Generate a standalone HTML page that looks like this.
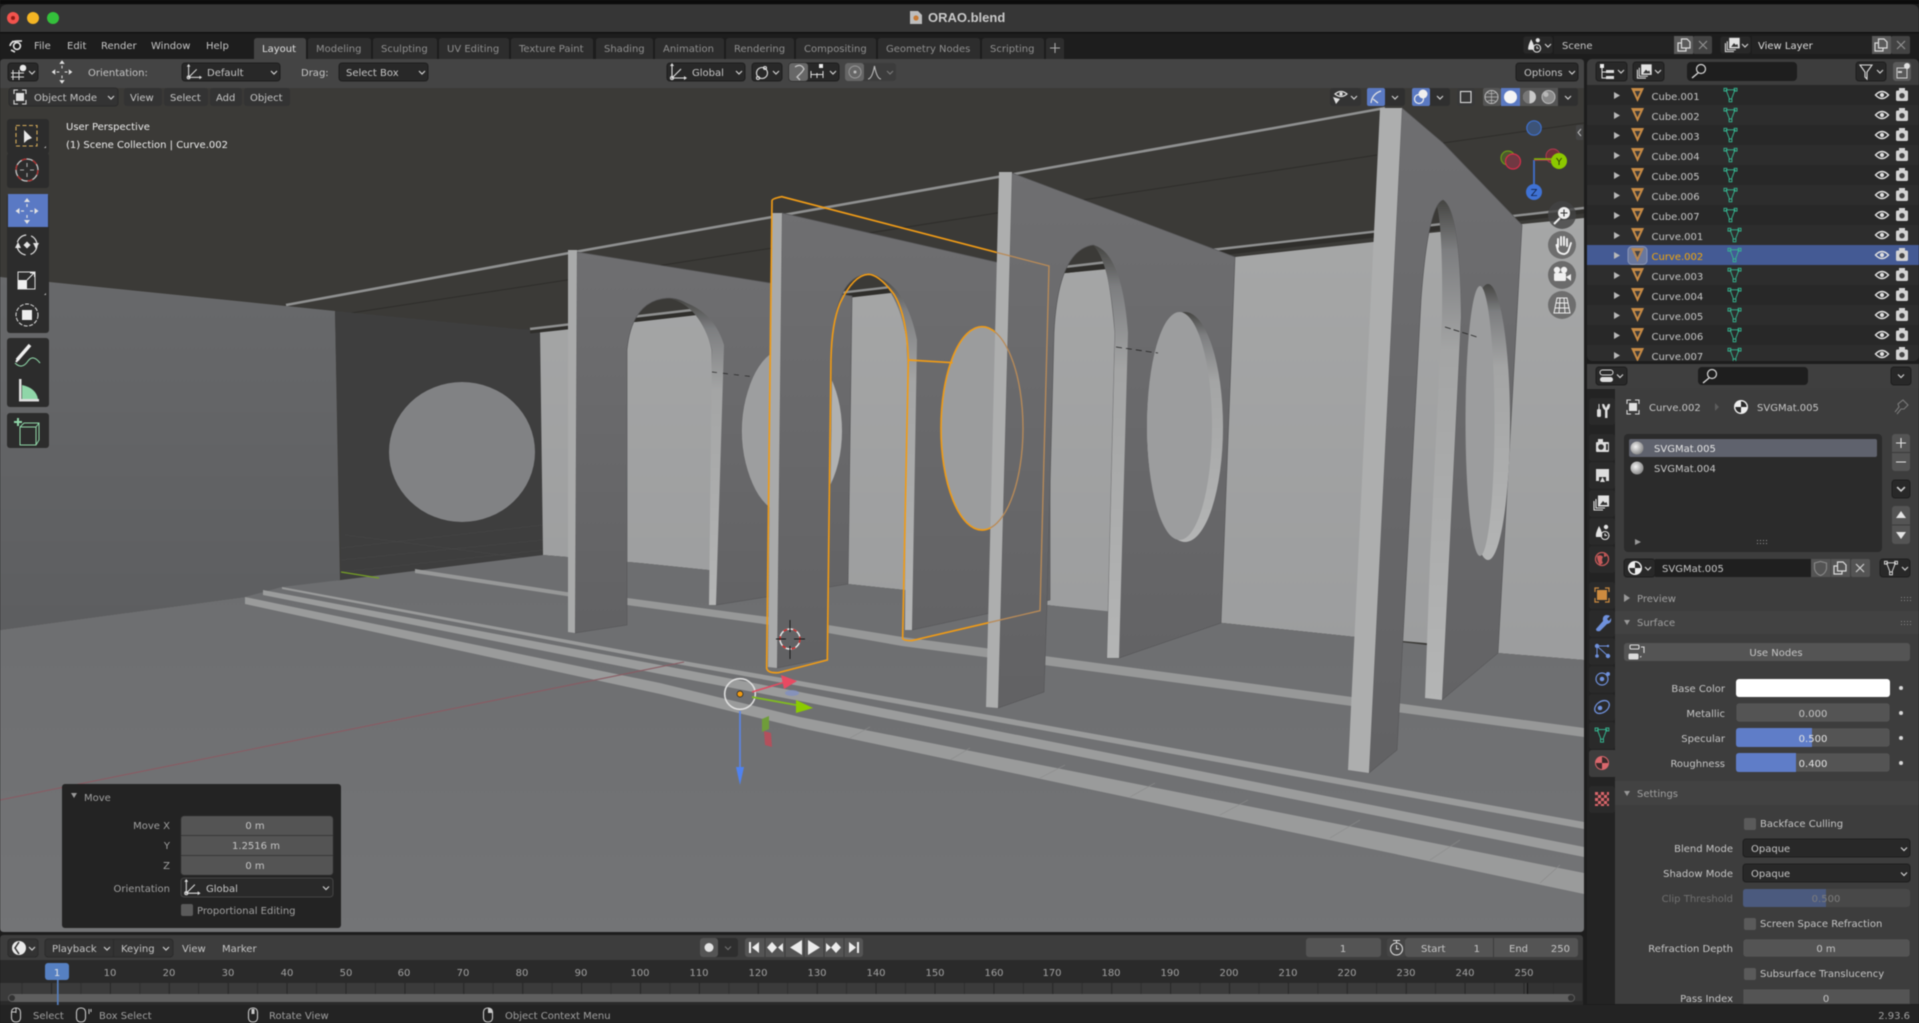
<!DOCTYPE html>
<html><head><meta charset="utf-8"><title>ORAO.blend</title>
<style>
html,body{margin:0;padding:0;background:#1d1d1d;overflow:hidden}
svg{display:block;position:absolute;left:0;top:0;filter:blur(.4px)}
text{font-family:"DejaVu Sans","Liberation Sans",sans-serif;font-size:10px;fill:#c6c6c6}
.tab{fill:#8f8f8f}.dim{fill:#a0a0a0}.w{fill:#e4e4e4}.m{text-anchor:middle}.e{text-anchor:end}
.dd{fill:#282828;stroke:#1e1e1e;stroke-width:1}.nf{fill:#545454;stroke:#3a3a3a;stroke-width:.6}
.ln{fill:none;stroke:#d8d8d8;stroke-width:1.2}
.s{fill:#a9aaaa}.fc{fill:url(#gp);stroke:#58585a;stroke-width:.7}
.navb{fill:#2a2a2a}
</style></head>
<body>
<svg width="1919" height="1023" viewBox="0 0 1919 1023" xmlns="http://www.w3.org/2000/svg">
<defs>
<linearGradient id="gp" x1="0" y1="0" x2="0" y2="1"><stop offset="0" stop-color="#6f6f71"/><stop offset="1" stop-color="#626264"/></linearGradient>
<linearGradient id="gf" x1="0" y1="0" x2="0" y2="1"><stop offset="0" stop-color="#6d6e70"/><stop offset="1" stop-color="#737476"/></linearGradient>
<linearGradient id="gw" x1="0" y1="0" x2="0" y2="1"><stop offset="0" stop-color="#a6a7a7"/><stop offset="1" stop-color="#9c9d9e"/></linearGradient>
<linearGradient id="gl" x1="0" y1="0" x2="0" y2="1"><stop offset="0" stop-color="#68696b"/><stop offset="1" stop-color="#5d5e60"/></linearGradient>
<linearGradient id="gs" x1="0" y1="0" x2="0" y2="1"><stop offset="0" stop-color="#454542"/><stop offset=".1" stop-color="#7d7e80"/><stop offset=".3" stop-color="#a4a5a5"/><stop offset="1" stop-color="#b4b5b5"/></linearGradient>
<radialGradient id="sph" cx=".4" cy=".4" r=".7"><stop offset="0" stop-color="#f4f4f4"/><stop offset="1" stop-color="#7a7a7a"/></radialGradient>
<pattern id="tl" x="51" y="0" width="58.9" height="30" patternUnits="userSpaceOnUse"><rect x="0" width="1" height="30" fill="#262626"/><rect x="29.4" width="1" height="30" fill="#2f2f2f"/></pattern>
<clipPath id="cpFront"><polygon points="0,0 1075,0 1040,1560 0,1560"/></clipPath>
<clipPath id="cpBack"><polygon points="1075,0 1600,0 1600,1560 1040,1560"/></clipPath>
<clipPath id="cpOut"><rect x="1587" y="59" width="332" height="302" rx="5"/></clipPath>
<clipPath id="cpView"><path d="M0,88 H1584 V928 Q1584,932 1580,932 H4 Q0,932 0,928 Z"/></clipPath>
<g id="ch"><polyline points="-3,-1.5 0,1.5 3,-1.5" fill="none" stroke="#cfcfcf" stroke-width="1.2"/></g>
<g id="ob"><polygon points="-6.5,-7 6.5,-7 0,7" fill="#c68a45"/><polygon points="-2.8,-4 2.8,-4 0,2.2" fill="#3a3a3a"/></g>
<g id="me" fill="none" stroke="#35b892" stroke-width=".9"><path d="M-4.5,-5.2 H4.5 L.8,4.5 M-4.5,-5.2 L-.8,4.5"/><rect x="-6.5" y="-6.7" width="2.8" height="2.8"/><rect x="3.7" y="-6.7" width="2.8" height="2.8"/><rect x="-1.4" y="4" width="2.8" height="2.8"/></g>
<g id="mew" fill="none" stroke="#e4e4e4" stroke-width=".9"><path d="M-4.5,-5.2 H4.5 L.8,4.5 M-4.5,-5.2 L-.8,4.5"/><rect x="-6.5" y="-6.7" width="2.8" height="2.8"/><rect x="3.7" y="-6.7" width="2.8" height="2.8"/><rect x="-1.4" y="4" width="2.8" height="2.8"/></g>
<g id="ey"><path d="M-6.5,0 Q0,-7 6.5,0 Q0,7 -6.5,0 Z" fill="none" stroke="#e0e0e0" stroke-width="1.4"/><circle r="2.1" fill="#e0e0e0"/></g>
<g id="ca"><rect x="-6" y="-4.5" width="12" height="10.5" rx="1.5" fill="#d4d4d4"/><rect x="-3" y="-7" width="6" height="3" fill="#d4d4d4"/><circle cy=".7" r="3.2" fill="#444" stroke="#d4d4d4"/></g>
<g id="mv" fill="#e2e2e2"><polygon points="0,-13 -3,-9 3,-9"/><polygon points="0,13 -3,9 3,9"/><polygon points="-11.5,0 -7.5,-3 -7.5,3"/><polygon points="11.5,0 7.5,-3 7.5,3"/><rect x="-.6" y="-7" width="1.2" height="3"/><rect x="-.6" y="4" width="1.2" height="3"/><rect x="-6" y="-.6" width="3" height="1.2"/><rect x="3" y="-.6" width="3" height="1.2"/></g>
<g id="ax" fill="none" stroke="#dedede" stroke-width="1.1"><path d="M-6,-7 V6 H7"/><path d="M-6,6 L3,-3"/><polygon points="-6,-9 -8,-6 -4,-6" fill="#dedede" stroke="none"/><polygon points="9,6 6,4 6,8" fill="#dedede" stroke="none"/><circle cx="-6" cy="6" r="1.6"/></g>
<g id="cb"><circle r="7" fill="#eee"/><path d="M0,0 V-5.6 A5.6,5.6 0 0 1 5.6,0 Z M0,0 V5.6 A5.6,5.6 0 0 1 -5.6,0 Z" fill="#2a2a2a"/></g>
<g id="msel" fill="none" stroke="#d8d8d8" stroke-width="1.1"><path d="M-6,-3 V-7 H-2 M2,-7 H6 V-3 M6,3 V7 H2 M-2,7 H-6 V3"/><rect x="-4" y="-4" width="8" height="8" fill="#e0e0e0" stroke="none"/></g>
<g id="copy" fill="none" stroke="#dcdcdc" stroke-width="1.2"><path d="M-2.5,-6 H3 L6,-3 V3 H-2.5 Z"/><path d="M-2.5,-2 H-6 V6 H2 V3"/></g>
<g id="xx" stroke="#cfcfcf" stroke-width="1.2"><path d="M-4,-4 L4,4 M4,-4 L-4,4"/></g>
<g id="sc"><path d="M-6,5 Q-7,2 -3,-6 Q1,1 0,5 Z" fill="#e2e2e2"/><circle cx="4" cy="-5" r="2.2" fill="#e2e2e2"/><circle cx="3" cy="3.5" r="4" fill="none" stroke="#e2e2e2" stroke-width="1.1"/><path d="M3,1.5 V3.5 H5" stroke="#e2e2e2" fill="none"/></g>
<g id="vl" fill="none" stroke="#e2e2e2" stroke-width="1.1"><rect x="-3.5" y="-7" width="10" height="10" fill="#e2e2e2"/><path d="M-6,-4 V5 H3 M-8,-2 V7 H1"/><polygon points="-2,2 1,-2 3,0 4.5,-1 5.5,2" fill="#333" stroke="none"/></g>
<g id="mouse" fill="none" stroke="#c9c9c9" stroke-width="1.1"><rect x="-4.5" y="-7" width="9" height="14" rx="4"/></g>
</defs>

<!-- window base -->
<rect width="1919" height="1023" fill="#1d1d1d"/>
<rect width="1919" height="4" fill="#0b0b0b"/>
<path d="M0,12 Q0,4.5 8,4.5 H1911 Q1919,4.5 1919,12 V32 H0 Z" fill="#363636"/>
<rect y="32" width="1919" height="1.2" fill="#0d0d0d"/>
<circle cx="13" cy="18" r="6" fill="#f2534d"/><circle cx="13" cy="18" r="2" fill="#8e1b16"/>
<circle cx="33" cy="18" r="6" fill="#f4b524"/>
<circle cx="53" cy="18" r="6" fill="#34c03b"/>
<path d="M910,11 H918 L922,15 V24 H910 Z" fill="#bdbdbd"/><circle cx="916" cy="18" r="2.6" fill="#c77a35"/>
<text x="928" y="22" style="font:bold 13px 'Liberation Sans',sans-serif;fill:#c9c9c9">ORAO.blend</text>

<!-- top bar -->
<g fill="none" stroke="#e4e4e4" stroke-width="1.6"><circle cx="17" cy="46" r="3.4"/><path d="M10,46 Q11,41 17,41 L22,41 M12,41.5 H16 M11,50 L15,52"/></g>
<text x="34" y="49">File</text><text x="67" y="49">Edit</text><text x="101" y="49">Render</text><text x="151" y="49">Window</text><text x="206" y="49">Help</text>
<path d="M254,59 V41 Q254,38 257,38 H303 Q306,38 306,41 V59 Z" fill="#444"/>
<g fill="#2d2d2d">
<path d="M308,59 V41 Q308,38 311,38 H368 Q371,38 371,41 V59 Z"/><path d="M373,59 V41 Q373,38 376,38 H434 Q437,38 437,41 V59 Z"/><path d="M439,59 V41 Q439,38 442,38 H506 Q509,38 509,41 V59 Z"/><path d="M511,59 V41 Q511,38 514,38 H590 Q593,38 593,41 V59 Z"/><path d="M596,59 V41 Q596,38 599,38 H650 Q653,38 653,41 V59 Z"/><path d="M655,59 V41 Q655,38 658,38 H721 Q724,38 724,41 V59 Z"/><path d="M726,59 V41 Q726,38 729,38 H791 Q794,38 794,41 V59 Z"/><path d="M796,59 V41 Q796,38 799,38 H873 Q876,38 876,41 V59 Z"/><path d="M878,59 V41 Q878,38 881,38 H977 Q980,38 980,41 V59 Z"/><path d="M982,59 V41 Q982,38 985,38 H1041 Q1044,38 1044,41 V59 Z"/><path d="M1046,59 V41 Q1046,38 1049,38 H1061 Q1064,38 1064,41 V59 Z"/>
</g>
<text x="262" y="52" style="fill:#e0e0e0">Layout</text>
<text class="tab" x="316" y="52">Modeling</text><text class="tab" x="381" y="52">Sculpting</text><text class="tab" x="447" y="52">UV Editing</text><text class="tab" x="519" y="52">Texture Paint</text><text class="tab" x="604" y="52">Shading</text><text class="tab" x="663" y="52">Animation</text><text class="tab" x="734" y="52">Rendering</text><text class="tab" x="804" y="52">Compositing</text><text class="tab" x="886" y="52">Geometry Nodes</text><text class="tab" x="990" y="52">Scripting</text>
<path d="M1055,43 V53 M1050,48 H1060" stroke="#a8a8a8" stroke-width="1.1"/>

<!-- top right scene/view layer -->
<rect class="dd" x="1523" y="36" width="30" height="18" rx="3"/><use href="#sc" transform="translate(1534,45) scale(.95)"/><use href="#ch" transform="translate(1548,45.5)"/>
<rect x="1554" y="36" width="120" height="18" fill="#232323"/><text x="1562" y="49">Scene</text>
<rect x="1674" y="36" width="19" height="18" fill="#5a5a5a"/><use href="#copy" transform="translate(1684,45)"/>
<rect x="1693" y="36" width="19" height="18" rx="2" fill="#434343"/><use href="#xx" transform="translate(1703,45)" opacity=".55"/>
<rect class="dd" x="1720" y="36" width="31" height="18" rx="3"/><use href="#vl" transform="translate(1733,45) scale(.95)"/><use href="#ch" transform="translate(1745,45.5)"/>
<rect x="1752" y="36" width="120" height="18" fill="#232323"/><text x="1758" y="49" style="fill:#dcdcdc">View Layer</text>
<rect x="1872" y="36" width="19" height="18" fill="#5a5a5a"/><use href="#copy" transform="translate(1881,45)"/>
<rect x="1891" y="36" width="19" height="18" rx="2" fill="#434343"/><use href="#xx" transform="translate(1901,45)" opacity=".55"/>

<!-- VIEWPORT SCENE -->
<path d="M0,63 Q0,59 4,59 H1580 Q1584,59 1584,63 V88 H0 Z" fill="#444"/>
<g clip-path="url(#cpView)">
<rect x="0" y="84" width="1584" height="848" fill="#3b3a37"/>
<!-- ceiling lines -->
<path d="M351,313 L567,280 L997,213 L1377,155" stroke="#2e2d2a" stroke-width="1" fill="none"/>
<path d="M1443,143 L1584,123" stroke="#2e2d2a" stroke-width="1" fill="none"/>
<path d="M286,305 L569,253 L1020,173 L1280,127 L1385,108" stroke="#8f9090" stroke-width="2.6" fill="none"/>
<!-- left wall -->
<polygon points="0,277 335,311 340,580 245,597 0,630" fill="url(#gl)"/>
<!-- dark back wall -->
<polygon points="335,311 518,329 543,330 543,556 341,580" fill="#3e3e3e"/>
<g stroke="#484848" stroke-width=".5" fill="none"><path d="M341,560 L543,540 M341,548 L543,525 M341,572 L543,550 M345,535 L540,560"/></g>
<ellipse cx="462" cy="452" rx="73" ry="70" fill="#818284"/>
<!-- back light wall -->
<polygon points="540,330 640,320 852,295 1066,273 1235,257 1373,242 1429,233 1584,218 1584,660 1498,653 1425,643 1356,637 1223,623 1106,612 1047,605 848,584 708,570 640,563 543,555" fill="url(#gw)"/>
<path d="M530,329 L640,317 L1220,251 L1584,209" stroke="#2f2e2b" stroke-width="5" fill="none" transform="translate(0,2)"/>
<path d="M530,329 L640,316 L1220,249 L1584,208" stroke="#8f9090" stroke-width="2.4" fill="none"/>
<!-- floor -->
<polygon points="0,630 245,597 282,587 341,580 543,555 640,563 848,584 1047,605 1223,623 1356,637 1498,653 1584,660 1584,932 0,932" fill="url(#gf)"/>
<path d="M341,572 L379,578" stroke="#76a025" stroke-width="1.2"/>
<!-- steps -->
<polygon points="415,569 566,592 627,598 828,625 902,637 1584,728 1584,737 902,646 828,633 627,605 566,596 415,573" fill="#979898"/>
<polygon points="282,587 660,657 800,681 1584,822 1584,829 800,686 660,661 282,589" fill="#9a9b9b"/>
<polygon points="263,590 660,665 800,692 1584,847 1584,857 800,701 660,674 263,595" fill="#9b9c9c"/>
<polygon points="245,597 660,683 800,717 1584,873 1584,894 800,728 660,694 245,604" fill="#9a9b9b"/>
<path d="M850,738 L870,727 M950,760 L970,748 M1040,778 L1065,765 M1130,797 L1155,783 M1220,815 L1248,800 M1330,838 L1360,820 M1430,860 L1460,840 M1540,883 L1560,865" stroke="#8a8b8b" stroke-width=".7" fill="none"/>
<!-- red axis -->
<path d="M0,800 L684,662" stroke="#8a5a62" stroke-width="1.1"/>

<!-- Panel A -->
<path class="fc" d="M577,252 L770,283 L852,296 L848,584 L716,605 L712,350 Q700,298 668,298 Q632,300 627,350 L627,625 L575,633 Z"/>
<path d="M668,298 Q712,305 724,345 L716,605 L709,605 L712,350 Q700,305 668,298 Z" fill="url(#gs)"/>
<polygon class="s" points="568,250 577,250 575,633 568,632"/>
<ellipse cx="792" cy="431" rx="50" ry="84" fill="#b0b1b1"/><ellipse cx="787" cy="431" rx="44.5" ry="83" fill="#9d9e9f"/>
<path d="M712,372 L755,377" stroke="#222" stroke-width=".7" stroke-dasharray="5 6" fill="none"/>

<!-- Panel B -->
<path class="fc" d="M782,213 L1000,263 L1050,275 L1050,600 L912,630 L907,340 Q895,274 868,274 Q835,276 832,347 L828,658 L777,668 Z"/>
<ellipse cx="982" cy="428" rx="41" ry="102" fill="#9b9c9d"/>
<path d="M868,274 Q905,280 917,340 L912,630 L905,630 L907,340 Q895,280 868,274 Z" fill="url(#gs)"/>
<polygon class="s" points="772,213 782,213 777,668 768,667"/>

<!-- Panel C -->
<path class="fc" d="M1012,173 L1235,257 L1221,623 L1119,658 L1107,658 L1115,333 Q1108,250 1093,245 Q1058,250 1054,333 L1047,603 L1044,692 L998,708 Z"/>
<path d="M1093,245 Q1122,252 1128,333 L1119,658 L1107,658 L1115,333 Q1110,262 1093,245 Z" fill="url(#gs)"/>
<ellipse cx="1185" cy="427" rx="38" ry="115" fill="url(#gs)"/><ellipse cx="1179.5" cy="426" rx="32.5" ry="114" fill="#9c9d9e"/>
<polygon points="999,172 1012,172 998,708 986,707" fill="#adaeae"/>
<path d="M1116,347 L1158,353" stroke="#222" stroke-width=".8" stroke-dasharray="6 4" fill="none"/>

<!-- Panel D -->
<path class="fc" d="M1402,108 L1443,143 L1522,225 L1498,653 L1442,700 L1447,600 L1461,317 Q1460,210 1443,200 Q1428,205 1421,300 L1405,600 L1397,750 L1369,773 Z"/>
<path d="M1443,200 Q1460,210 1461,317 L1447,600 L1442,700 L1425,698 L1430,560 L1442,317 Q1443,230 1437,206 Z" fill="url(#gs)"/>
<ellipse cx="1488" cy="422" rx="22" ry="138" fill="url(#gs)"/><ellipse cx="1480" cy="421" rx="14.5" ry="135" fill="#9c9d9e"/>
<polygon points="1380,108 1402,108 1369,773 1348,770" fill="#adaeae"/>
<path d="M1445,327 L1477,337" stroke="#222" stroke-width=".8" stroke-dasharray="6 3" fill="none"/>

<!-- selection outline -->
<g transform="translate(640,180) scale(.33333)" fill="none" stroke-width="5">
<g clip-path="url(#cpFront)" stroke="#ef9b17">
<path d="M396,62 Q396,56 425,50 L1227,258 L1200,1292 L815,1382 Q790,1382 788,1375 L805,540 Q800,400 760,340 Q715,283 685,283 Q640,285 600,370 Q575,430 573,540 L562,1440 L415,1478 Q383,1480 380,1465 Z"/>
<ellipse cx="1026" cy="745" rx="123" ry="305"/><path d="M805,540 L938,548"/>
</g>
<g clip-path="url(#cpBack)" stroke="#b98b58" stroke-width="4">
<path d="M396,62 Q396,56 425,50 L1227,258 L1200,1292 L815,1382"/>
<ellipse cx="1026" cy="745" rx="123" ry="305"/>
</g>
</g>
<!-- 3D cursor -->
<circle cx="790" cy="639" r="10" fill="none" stroke="#eee" stroke-width="1.4"/>
<circle cx="790" cy="639" r="10" fill="none" stroke="#d02020" stroke-width="1.4" stroke-dasharray="4 6"/>
<path d="M790,620 V632 M790,646 V659 M776,639 H786 M794,639 H805" stroke="#1a1a1a" stroke-width="1"/>
<!-- gizmo -->
<circle cx="740" cy="694" r="15.3" fill="none" stroke="#dedede" stroke-width="1.6"/>
<circle cx="740" cy="694" r="3" fill="#f09a10" stroke="#222" stroke-width=".7"/>
<path d="M752,692 L785,682" stroke="#e04a60" stroke-width="1.6"/><polygon points="781,675 797,681 784,689" fill="#e84a62"/>
<path d="M752,697 L796,705" stroke="#80bb20" stroke-width="1.8"/><polygon points="796,700 813,708 796,713" fill="#8bcb00"/>
<ellipse cx="792" cy="693" rx="7" ry="3" fill="#7e8fc8" opacity=".7"/>
<polygon points="762,719 769,716 769,729 762,732" fill="#6f9d3a"/>
<polygon points="764,731 771,733 772,747 765,745" fill="#b3505c"/>
<path d="M740,711 V772" stroke="#5a86e8" stroke-width="1.6"/><polygon points="736,767 744,767 740,785" fill="#4f82f0"/>
</g>

<!-- tool header widgets -->
<rect class="dd" x="8" y="63" width="30" height="18" rx="3"/>
<g stroke="#d8d8d8" stroke-width="1" fill="none"><path d="M13,70 V80 M19,70 V80 M11,73 H24 M11,77 H24"/></g><circle cx="23" cy="68" r="3.3" fill="#e8e8e8"/><use href="#ch" transform="translate(32,72.5)"/>
<use href="#mv" transform="translate(62,72) scale(.9)"/>
<text x="88" y="76">Orientation:</text>
<rect class="dd" x="182" y="63" width="98" height="18" rx="3"/><use href="#ax" transform="translate(194,72) scale(.9)"/><text x="207" y="76">Default</text><use href="#ch" transform="translate(274,72.5)"/>
<text x="301" y="76">Drag:</text>
<rect class="dd" x="339" y="63" width="89" height="18" rx="3"/><text x="346" y="76">Select Box</text><use href="#ch" transform="translate(422,72.5)"/>
<rect class="dd" x="667" y="63" width="78" height="18" rx="3"/><use href="#ax" transform="translate(678,72)"/><text x="692" y="76">Global</text><use href="#ch" transform="translate(739,72.5)"/>
<rect class="dd" x="752" y="63" width="30" height="18" rx="3"/><g fill="none" stroke="#dcdcdc" stroke-width="1.1"><circle cx="762" cy="73" r="5.5"/><circle cx="765" cy="68" r="1.5"/><circle cx="758" cy="78" r="1.5"/></g><use href="#ch" transform="translate(776,72.5)"/>
<rect class="dd" x="789" y="63" width="50" height="18" rx="3"/><rect x="789" y="63" width="19" height="18" rx="3" fill="#676767"/>
<path d="M795,67 Q801,63 804,69 L802,72 L797,77 L800,80" fill="none" stroke="#c4c4c4" stroke-width="1.3"/>
<path d="M811,71 V78 M817,73 V78 M823,71 V78 M811,74.5 H823" stroke="#ddd" stroke-width="1"/><rect x="819" y="64" width="4" height="4" fill="#eee"/><use href="#ch" transform="translate(833,72.5)"/>
<rect x="845" y="63" width="51" height="18" rx="3" fill="#3c3c3c"/><rect x="845" y="63" width="19" height="18" rx="3" fill="#666"/>
<circle cx="855" cy="72" r="6" fill="none" stroke="#999"/><circle cx="855" cy="72" r="1.5" fill="#bbb"/>
<path d="M868,79 Q872,79 874.500,66 Q877,79 881,79" stroke="#bcbcbc" fill="none" stroke-width="1.1"/><use href="#ch" transform="translate(890,72.5)" opacity=".4"/>
<rect class="dd" x="1516" y="63" width="62" height="18" rx="3"/><text x="1524" y="76">Options</text><use href="#ch" transform="translate(1572,72.5)"/>

<!-- second row -->
<rect x="9" y="88" width="109" height="18" rx="3" fill="#333" stroke="#2a2a2a"/><use href="#msel" transform="translate(20,97)"/><text x="34" y="101">Object Mode</text><use href="#ch" transform="translate(111,97.5)"/>
<rect x="124" y="88" width="38" height="18" rx="3" fill="#333"/><text x="130" y="101">View</text>
<rect x="164" y="88" width="44" height="18" rx="3" fill="#333"/><text x="170" y="101">Select</text>
<rect x="210" y="88" width="32" height="18" rx="3" fill="#333"/><text x="216" y="101">Add</text>
<rect x="244" y="88" width="46" height="18" rx="3" fill="#333"/><text x="250" y="101">Object</text>

<!-- right overlay header -->
<rect x="1330" y="88" width="31" height="18" rx="3" fill="#333"/><path d="M1335,94 Q1341,89 1347,94 Q1341,99 1335,94 Z" fill="none" stroke="#e0e0e0" stroke-width="1.2"/><circle cx="1341" cy="94" r="1.7" fill="#e0e0e0"/><polygon points="1333,97 1340,99 1336,104" fill="#e0e0e0"/><use href="#ch" transform="translate(1354,97.5)"/>
<rect x="1367" y="88" width="38" height="18" rx="3" fill="#2f2f2f"/><rect x="1367" y="88" width="18" height="18" rx="2" fill="#5a79c2"/><path d="M1371,103 Q1372,94 1381,91 M1373,99 L1378,103" stroke="#e4e4e4" fill="none" stroke-width="1.2"/><use href="#ch" transform="translate(1395,97.5)"/>
<rect x="1412" y="88" width="38" height="18" rx="3" fill="#2f2f2f"/><rect x="1412" y="88" width="18" height="18" rx="2" fill="#5a79c2"/><circle cx="1419" cy="99" r="4.5" fill="none" stroke="#eee" stroke-width="1.2"/><circle cx="1423" cy="94" r="4.5" fill="#eee"/><use href="#ch" transform="translate(1440,97.5)"/>
<rect x="1457" y="88" width="18" height="18" rx="3" fill="#383838"/><rect x="1460.5" y="91.5" width="10.5" height="11" fill="none" stroke="#dcdcdc" stroke-width="1.1"/>
<rect x="1483" y="88" width="95" height="18" rx="3" fill="#2f2f2f"/>
<rect x="1483" y="88" width="18" height="18" rx="2" fill="#555"/><rect x="1501" y="88" width="19" height="18" fill="#5a79c2"/><rect x="1520" y="88" width="38" height="18" fill="#555"/>
<circle cx="1491.5" cy="97" r="6.5" fill="none" stroke="#bbb"/><path d="M1485,97 H1498 M1491.5,90.5 V103.5 M1487,92.5 Q1491.5,95 1496,92.5 M1487,101.5 Q1491.5,99 1496,101.5" stroke="#bbb" fill="none" stroke-width=".7"/>
<circle cx="1510.5" cy="97" r="6.5" fill="#f4f4f4"/>
<circle cx="1529.5" cy="97" r="6.5" fill="#c8c8c8"/><path d="M1529.5,90.5 A6.5,6.5 0 0 0 1529.5,103.5 Z" fill="#777"/>
<circle cx="1548.5" cy="97" r="6.5" fill="#8a8a8a" stroke="#bbb"/><circle cx="1546" cy="94.5" r="2.5" fill="#ccc" opacity=".7"/>
<use href="#ch" transform="translate(1568,97.5)"/>

<!-- N panel arrow -->
<path d="M1578,125 L1583,125 L1583,140 L1578,140 Q1576,140 1576,138 V127 Q1576,125 1578,125Z" fill="#444"/><path d="M1581,129 L1578,132.5 L1581,136" fill="none" stroke="#bbb"/>

<!-- nav gizmo -->
<circle cx="1534" cy="128" r="7.2" fill="#3c5378" stroke="#3f70cc" stroke-width="1.2"/>
<circle cx="1508" cy="158" r="7" fill="#4c5a2d" stroke="#6a9a18" stroke-width="1.2"/>
<circle cx="1553" cy="156" r="7" fill="#6d3038" stroke="#b43950" stroke-width="1"/>
<circle cx="1513" cy="161.5" r="7.5" fill="#703842" stroke="#d92d4a" stroke-width="1.2"/>
<path d="M1534,160 V185" stroke="#3f70cc" stroke-width="1.8"/>
<path d="M1534,160 H1553" stroke="#b8355a" stroke-width="1.2"/><path d="M1534,160 H1553" stroke="#82bb00" stroke-width="1.6" transform="translate(0,-1)"/>
<circle cx="1559" cy="161" r="8" fill="#8cc800"/><text x="1559" y="165" class="m" style="font-size:10px;fill:#2d3a08">Y</text>
<circle cx="1534" cy="192" r="8" fill="#3f72d4"/><text x="1534" y="196" class="m" style="font-size:10px;fill:#10224a">Z</text>
<!-- viewport nav buttons -->
<g><circle cx="1562" cy="215" r="14" fill="#444" opacity=".8"/><circle cx="1562" cy="245" r="14" fill="#6e6e6e"/><circle cx="1562" cy="275" r="14" fill="#6b6b6b"/><circle cx="1562" cy="305" r="14" fill="#6e6e6e"/></g>
<circle cx="1564" cy="213" r="6" fill="#eee"/><path d="M1564,209.5 V216.5 M1560.5,213 H1567.5" stroke="#333" stroke-width="1.1"/><path d="M1560,218 L1554,224" stroke="#eee" stroke-width="2"/>
<path d="M1556.500,245 L1558,251 Q1560,254 1564.500,254 Q1568,253 1569,249 L1571,243 M1558,247 V239 M1561,245 V237 M1564,245 V237 M1567,246 V239" stroke="#f2f2f2" stroke-width="1.900" fill="none" stroke-linecap="round"/>
<rect x="1554" y="273" width="12" height="8" rx="1.5" fill="#f0f0f0"/><circle cx="1557" cy="270" r="3.2" fill="#f0f0f0"/><circle cx="1564" cy="270" r="3.2" fill="#f0f0f0"/><polygon points="1566,277 1571,274 1571,281" fill="#f0f0f0"/>
<g fill="none" stroke="#f0f0f0" stroke-width="1"><path d="M1557,298 H1567 L1570,313 H1554 Z M1560,298 L1559,313 M1564,298 L1565,313 M1556,303 H1568 M1555,308 H1569"/></g>

<!-- toolbar -->
<g fill="#2c2c2c">
<rect x="7" y="119" width="42" height="35" rx="3"/><rect x="7" y="153" width="42" height="35" rx="3"/>
<rect x="7" y="194" width="42" height="139" rx="3"/>
<rect x="7" y="338" width="42" height="69" rx="3"/>
<rect x="7" y="413" width="42" height="35" rx="3"/>
</g>
<rect x="8" y="194" width="40" height="33" fill="#5a79c4"/>
<rect x="16" y="125.500" width="21" height="20.500" fill="none" stroke="#d6ac5a" stroke-width="1.1" stroke-dasharray="4 2.500"/>
<polygon points="24,130 24,143 27.500,140 32,138" fill="#e8e8e8"/>
<path d="M44,148 L46,146 V148 Z" fill="#bbb"/>
<circle cx="27" cy="170" r="11" fill="none" stroke="#c9c9c9" stroke-width="1.3"/><circle cx="27" cy="170" r="11" fill="none" stroke="#b02a2a" stroke-width="1.3" stroke-dasharray="5 6.500"/>
<path d="M27,163 V167 M27,173 V177 M20,170 H24 M30,170 H34" stroke="#aaa" stroke-width="1.1"/>
<use href="#mv" transform="translate(27,211)"/>
<g><circle cx="27" cy="245" r="10" fill="none" stroke="#e0e0e0" stroke-width="1.2" stroke-dasharray="12 5"/><rect x="24.500" y="242.500" width="5" height="5" fill="#e4e4e4" transform="rotate(45 27 245)"/><polygon points="15,248 21,248 18,242" fill="#e4e4e4"/><polygon points="33,243 39,243 36,249" fill="#e4e4e4"/></g>
<rect x="18" y="272" width="17" height="17" fill="none" stroke="#dcdcdc" stroke-width="1"/><rect x="18" y="280" width="9" height="9" fill="#eee"/><path d="M27,280 L34,273 M30,273 H34.500 V277" stroke="#eee" fill="none"/>
<path d="M44,295 L46,293 V295 Z" fill="#bbb"/>
<circle cx="27" cy="315" r="11" fill="none" stroke="#e0e0e0" stroke-dasharray="4 1.500"/><rect x="22" y="310" width="10" height="10" fill="#eee"/>
<g><path d="M17,360 L30,345" stroke="#eee" stroke-width="3.500"/><path d="M16,362 L19,358" stroke="#eee" stroke-width="2"/><path d="M15,363 Q22,370 28,361 Q33,354 40,363" fill="none" stroke="#8fd6a8" stroke-width="1.1"/></g>
<rect x="19" y="379" width="2.500" height="22" fill="#ddd"/><rect x="19" y="399" width="20" height="2.500" fill="#ddd"/><path d="M22,385 Q36,388 38,399 H22 Z" fill="#8fd6a8"/>
<rect x="20" y="427" width="16" height="18" fill="none" stroke="#8fd6a8" stroke-width="1"/><path d="M20,427 L24,423 H39 V440 L36,445 M36,427 L39,423" fill="none" stroke="#8fd6a8"/><path d="M18,418 V426 M14,422 H22" stroke="#8fd6a8" stroke-width="2"/>

<text x="66" y="130" style="fill:#eee">User Perspective</text>
<text x="66" y="148" style="fill:#eee">(1) Scene Collection | Curve.002</text>

<!-- Move panel -->
<rect x="62" y="784" width="279" height="144" rx="3" fill="#232323"/>
<polygon points="71,793 77,793 74,798" fill="#999"/>
<text x="84" y="801" class="dim">Move</text>
<rect class="nf" x="181" y="816" width="152" height="59" rx="3"/><path d="M181,835.500 H333 M181,855.500 H333" stroke="#383838"/>
<text x="170" y="829" class="e dim">Move X</text><text x="170" y="849" class="e dim">Y</text><text x="170" y="869" class="e dim">Z</text>
<text x="255" y="829" class="m">0 m</text><text x="256" y="849" class="m">1.2516 m</text><text x="255" y="869" class="m">0 m</text>
<text x="170" y="892" class="e dim">Orientation</text>
<rect x="181" y="878" width="152" height="19" rx="3" fill="#292929" stroke="#444"/><use href="#ax" transform="translate(192,887.500) scale(.95)"/><text x="206" y="892">Global</text><use href="#ch" transform="translate(326,888)"/>
<rect x="181" y="904" width="12" height="12" rx="2" fill="#5a5a5a"/><text x="197" y="914" class="dim">Proportional Editing</text>

<!-- Timeline -->
<path d="M0,939 Q0,935 4,935 H1579 Q1583,935 1583,939 V960 H0 Z" fill="#3d3d3d"/>
<rect x="8" y="939" width="30" height="18" rx="3" fill="#333" stroke="#2a2a2a"/><circle cx="19" cy="948" r="7" fill="#eaeaea"/><path d="M19,942 L15,948 L19,954" fill="none" stroke="#333" stroke-width="1.5"/><use href="#ch" transform="translate(32,948.500)"/>
<rect x="45" y="939" width="128" height="18" rx="3" fill="#333" stroke="#2a2a2a"/><path d="M113.500,939 V957" stroke="#2a2a2a"/>
<text x="52" y="952">Playback</text><use href="#ch" transform="translate(107,948.500)"/>
<text x="121" y="952">Keying</text><use href="#ch" transform="translate(166,948.500)"/>
<text x="182" y="952">View</text><text x="222" y="952">Marker</text>
<rect x="700" y="938" width="38" height="19" rx="3" fill="#2e2e2e"/><rect x="700" y="938" width="18" height="19" rx="3" fill="#545454"/><circle cx="709" cy="947.500" r="4.500" fill="#e2e2e2"/><use href="#ch" transform="translate(728,948)" opacity=".4"/>
<rect x="745" y="938" width="118" height="19" rx="3" fill="#545454"/>
<path d="M765,938 V957 M785,938 V957 M804,938 V957 M824,938 V957 M844,938 V957" stroke="#3c3c3c"/>
<g fill="#ececec">
<rect x="749" y="942" width="2" height="11"/><polygon points="759,942 752,947.500 759,953"/>
<polygon points="772,942 767,947.500 772,953 777,947.500"/><polygon points="783,943 778,947.500 783,952"/>
<polygon points="802,940 790,947.500 802,955"/>
<polygon points="808,940 820,947.500 808,955"/>
<polygon points="826,943 831,947.500 826,952"/><polygon points="836,942 831,947.500 836,953 841,947.500"/>
<polygon points="849,942 856,947.500 849,953"/><rect x="857" y="942" width="2" height="11"/>
</g>
<rect x="1306" y="938" width="75" height="19" rx="3" fill="#545454"/><text x="1343" y="952" class="m">1</text>
<rect x="1387" y="938" width="19" height="19" rx="3" fill="#454545"/><circle cx="1396.500" cy="949" r="6" fill="none" stroke="#ddd" stroke-width="1.100"/><path d="M1396.500,945 V949 H1399 M1393,940.500 H1400 M1396.500,940.500 V943" stroke="#ddd" fill="none"/>
<rect x="1405" y="938" width="173" height="19" rx="3" fill="#545454"/><path d="M1493.500,938 V957" stroke="#3c3c3c"/>
<text x="1421" y="952">Start</text><text x="1480" y="952" class="e">1</text><text x="1509" y="952">End</text><text x="1570" y="952" class="e">250</text>
<rect y="960" width="1583" height="23" fill="#2a2a2a"/>
<rect y="983" width="1583" height="22" fill="#3b3b3b"/><rect y="983" width="1583" height="22" fill="url(#tl)"/>
<rect x="1527" y="983" width="56" height="22" fill="#2c2c2c" opacity=".5"/>
<rect x="1527" y="983" width="1" height="22" fill="#111"/>
<rect x="0" y="1001" width="1583" height="4" fill="#2a2a2a"/>
<rect x="8" y="994" width="1567" height="8" rx="4" fill="#5f5f5f"/><circle cx="12" cy="998" r="3" fill="#333"/><circle cx="1571" cy="998" r="3" fill="#333"/>
<g>
<text class="m dim" x="110" y="976">10</text><text class="m dim" x="169" y="976">20</text><text class="m dim" x="228" y="976">30</text><text class="m dim" x="287" y="976">40</text><text class="m dim" x="346" y="976">50</text><text class="m dim" x="404" y="976">60</text><text class="m dim" x="463" y="976">70</text><text class="m dim" x="522" y="976">80</text><text class="m dim" x="581" y="976">90</text><text class="m dim" x="640" y="976">100</text><text class="m dim" x="699" y="976">110</text><text class="m dim" x="758" y="976">120</text><text class="m dim" x="817" y="976">130</text><text class="m dim" x="876" y="976">140</text><text class="m dim" x="935" y="976">150</text><text class="m dim" x="994" y="976">160</text><text class="m dim" x="1052" y="976">170</text><text class="m dim" x="1111" y="976">180</text><text class="m dim" x="1170" y="976">190</text><text class="m dim" x="1229" y="976">200</text><text class="m dim" x="1288" y="976">210</text><text class="m dim" x="1347" y="976">220</text><text class="m dim" x="1406" y="976">230</text><text class="m dim" x="1465" y="976">240</text><text class="m dim" x="1524" y="976">250</text>
</g>
<rect x="57" y="980" width="1.600" height="26" fill="#5680c2"/>
<rect x="45" y="963" width="24" height="17" rx="3" fill="#5680c2"/><text x="57" y="976" class="m w">1</text>

<!-- Status bar -->
<rect y="1005" width="1919" height="18" fill="#232323"/>
<use href="#mouse" transform="translate(16,1015)"/><path d="M16,1008 V1013 M11.500,1012 H16" stroke="#c9c9c9" fill="none"/>
<text x="33" y="1019" class="dim">Select</text>
<use href="#mouse" transform="translate(81,1015)"/><path d="M89,1009 V1014 M91,1009 V1012" stroke="#c9c9c9"/>
<text x="99" y="1019" class="dim">Box Select</text>
<use href="#mouse" transform="translate(253,1015)"/><rect x="251.500" y="1009" width="3" height="5" fill="#c9c9c9"/>
<text x="269" y="1019" class="dim">Rotate View</text>
<use href="#mouse" transform="translate(488,1015)"/><path d="M488,1008 V1013 H492.500 V1011 Q492,1008 488,1008" fill="#c9c9c9"/>
<text x="505" y="1019" class="dim">Object Context Menu</text>
<text x="1910" y="1019" class="e dim">2.93.6</text>

<!-- OUTLINER -->
<g clip-path="url(#cpOut)">
<rect x="1587" y="59" width="332" height="26" fill="#3d3d3d"/>
<rect x="1587" y="85" width="332" height="20" fill="#282828"/><rect x="1587" y="105" width="332" height="20" fill="#2d2d2d"/><rect x="1587" y="125" width="332" height="20" fill="#282828"/><rect x="1587" y="145" width="332" height="20" fill="#2d2d2d"/><rect x="1587" y="165" width="332" height="20" fill="#282828"/><rect x="1587" y="185" width="332" height="20" fill="#2d2d2d"/><rect x="1587" y="205" width="332" height="20" fill="#282828"/><rect x="1587" y="225" width="332" height="20" fill="#2d2d2d"/><rect x="1587" y="245" width="332" height="20" fill="#445a94"/><rect x="1587" y="265" width="332" height="20" fill="#2d2d2d"/><rect x="1587" y="285" width="332" height="20" fill="#282828"/><rect x="1587" y="305" width="332" height="20" fill="#2d2d2d"/><rect x="1587" y="325" width="332" height="20" fill="#282828"/><rect x="1587" y="345" width="332" height="20" fill="#2d2d2d"/>
<g fill="#b9b9b9">
<polygon points="1614,92 1620,95.500 1614,99"/><polygon points="1614,112 1620,115.500 1614,119"/><polygon points="1614,132 1620,135.500 1614,139"/><polygon points="1614,152 1620,155.500 1614,159"/><polygon points="1614,172 1620,175.500 1614,179"/><polygon points="1614,192 1620,195.500 1614,199"/><polygon points="1614,212 1620,215.500 1614,219"/><polygon points="1614,232 1620,235.500 1614,239"/><polygon points="1614,252 1620,255.500 1614,259"/><polygon points="1614,272 1620,275.500 1614,279"/><polygon points="1614,292 1620,295.500 1614,299"/><polygon points="1614,312 1620,315.500 1614,319"/><polygon points="1614,332 1620,335.500 1614,339"/><polygon points="1614,352 1620,355.500 1614,359"/>
</g>
<rect x="1628" y="246.500" width="19" height="18" rx="4" fill="#6a789e" stroke="#8b97b8"/>
<use href="#ob" x="1637.500" y="95"/><use href="#ob" x="1637.500" y="115"/><use href="#ob" x="1637.500" y="135"/><use href="#ob" x="1637.500" y="155"/><use href="#ob" x="1637.500" y="175"/><use href="#ob" x="1637.500" y="195"/><use href="#ob" x="1637.500" y="215"/><use href="#ob" x="1637.500" y="235"/><use href="#ob" x="1637.500" y="255" opacity=".85"/><use href="#ob" x="1637.500" y="275"/><use href="#ob" x="1637.500" y="295"/><use href="#ob" x="1637.500" y="315"/><use href="#ob" x="1637.500" y="335"/><use href="#ob" x="1637.500" y="355"/>
<g>
<text x="1651.500" y="100">Cube.001</text><text x="1651.500" y="120">Cube.002</text><text x="1651.500" y="140">Cube.003</text><text x="1651.500" y="160">Cube.004</text><text x="1651.500" y="180">Cube.005</text><text x="1651.500" y="200">Cube.006</text><text x="1651.500" y="220">Cube.007</text><text x="1651.500" y="240">Curve.001</text>
<text x="1651.500" y="260" style="fill:#f2a70a">Curve.002</text>
<text x="1651.500" y="280">Curve.003</text><text x="1651.500" y="300">Curve.004</text><text x="1651.500" y="320">Curve.005</text><text x="1651.500" y="340">Curve.006</text><text x="1651.500" y="360">Curve.007</text>
</g>
<use href="#me" x="1730.500" y="95"/><use href="#me" x="1730.500" y="115"/><use href="#me" x="1730.500" y="135"/><use href="#me" x="1730.500" y="155"/><use href="#me" x="1730.500" y="175"/><use href="#me" x="1730.500" y="195"/><use href="#me" x="1730.500" y="215"/><use href="#me" x="1734.500" y="235"/><use href="#me" x="1734.500" y="255"/><use href="#me" x="1734.500" y="275"/><use href="#me" x="1734.500" y="295"/><use href="#me" x="1734.500" y="315"/><use href="#me" x="1734.500" y="335"/><use href="#me" x="1734.500" y="355"/>
<use href="#ey" x="1882" y="95"/><use href="#ey" x="1882" y="115"/><use href="#ey" x="1882" y="135"/><use href="#ey" x="1882" y="155"/><use href="#ey" x="1882" y="175"/><use href="#ey" x="1882" y="195"/><use href="#ey" x="1882" y="215"/><use href="#ey" x="1882" y="235"/><use href="#ey" x="1882" y="255"/><use href="#ey" x="1882" y="275"/><use href="#ey" x="1882" y="295"/><use href="#ey" x="1882" y="315"/><use href="#ey" x="1882" y="335"/><use href="#ey" x="1882" y="354"/>
<use href="#ca" x="1902" y="95"/><use href="#ca" x="1902" y="115"/><use href="#ca" x="1902" y="135"/><use href="#ca" x="1902" y="155"/><use href="#ca" x="1902" y="175"/><use href="#ca" x="1902" y="195"/><use href="#ca" x="1902" y="215"/><use href="#ca" x="1902" y="235"/><use href="#ca" x="1902" y="255"/><use href="#ca" x="1902" y="275"/><use href="#ca" x="1902" y="295"/><use href="#ca" x="1902" y="315"/><use href="#ca" x="1902" y="335"/><use href="#ca" x="1902" y="354"/>
</g>
<!-- outliner header -->
<rect class="dd" x="1596" y="62" width="31" height="19" rx="3"/><path d="M1602,66 V78 H1606 M1602,72 H1606" stroke="#ddd" fill="none"/><rect x="1600" y="64" width="4" height="4" fill="#eee"/><rect x="1606" y="70" width="8" height="3" fill="#ddd"/><rect x="1606" y="76" width="8" height="3" fill="#ddd"/><use href="#ch" transform="translate(1621,71.500)"/>
<rect class="dd" x="1633" y="62" width="31" height="19" rx="3"/><use href="#vl" transform="translate(1645,71.500) scale(.95)"/><use href="#ch" transform="translate(1658,71.500)"/>
<rect x="1687" y="62" width="110" height="19" rx="4" fill="#1e1e1e"/><circle cx="1701" cy="69" r="4.500" fill="none" stroke="#d8d8d8" stroke-width="1.200"/><path d="M1698,73 L1692,78" stroke="#d8d8d8" stroke-width="1.400"/>
<rect class="dd" x="1856" y="62" width="30" height="19" rx="3"/><path d="M1860,65 H1872 L1867,72 V79 L1865,77 V72 Z" fill="none" stroke="#dcdcdc" stroke-width="1.100"/><use href="#ch" transform="translate(1880,71.500)"/>
<rect x="1893" y="62" width="18" height="19" rx="3" fill="#5a5a5a"/><rect x="1897" y="68" width="10" height="10" fill="none" stroke="#cfcfcf"/><rect x="1898" y="71" width="4" height="2" fill="#cfcfcf"/><circle cx="1907" cy="66" r="3" fill="#e0e0e0"/>

<!-- PROPERTIES -->
<path d="M1587,368 Q1587,364 1591,364 H1915 Q1919,364 1919,368 V1004 H1587 Z" fill="#3d3d3d"/>
<rect x="1587" y="364" width="332" height="25" fill="#3f3f3f"/>
<rect x="1587" y="389" width="28" height="615" fill="#232323"/>
<rect class="dd" x="1596" y="367" width="31" height="18" rx="3"/><rect x="1600" y="370" width="13" height="5" rx="2.500" fill="none" stroke="#ddd"/><rect x="1600" y="377" width="13" height="5" rx="2.500" fill="#ddd"/><use href="#ch" transform="translate(1620,376)"/>
<rect x="1698" y="367" width="110" height="18" rx="4" fill="#1e1e1e"/><circle cx="1712" cy="374" r="4.500" fill="none" stroke="#d8d8d8" stroke-width="1.200"/><path d="M1709,378 L1703,383" stroke="#d8d8d8" stroke-width="1.400"/>
<rect class="dd" x="1891" y="367" width="20" height="18" rx="3"/><use href="#ch" transform="translate(1901,376)"/>

<!-- nav tabs -->
<g>
<rect class="navb" x="1589" y="398" width="26" height="27" rx="3"/>
<rect class="navb" x="1589" y="434" width="26" height="27" rx="3"/><rect class="navb" x="1589" y="462" width="26" height="27" rx="3"/><rect class="navb" x="1589" y="490" width="26" height="27" rx="3"/><rect class="navb" x="1589" y="518" width="26" height="27" rx="3"/><rect class="navb" x="1589" y="546" width="26" height="27" rx="3"/>
<rect class="navb" x="1589" y="582" width="26" height="27" rx="3"/><rect class="navb" x="1589" y="610" width="26" height="27" rx="3"/><rect class="navb" x="1589" y="638" width="26" height="27" rx="3"/><rect class="navb" x="1589" y="666" width="26" height="27" rx="3"/><rect class="navb" x="1589" y="694" width="26" height="27" rx="3"/><rect class="navb" x="1589" y="722" width="26" height="27" rx="3"/>
<rect x="1589" y="750" width="28" height="27" rx="3" fill="#3d3d3d"/>
<rect class="navb" x="1589" y="786" width="26" height="27" rx="3"/>
</g>
<!-- tool -->
<g fill="#dcdcdc"><rect x="1597" y="409" width="4" height="8" rx="1.500"/><rect x="1598.500" y="404" width="1" height="6"/><path d="M1604,404 L1606,408 L1608,404 L1610,404 Q1610,409 1607.500,410 V418 H1605 V410 Q1602.500,409 1602,404 Z"/></g>
<!-- render -->
<rect x="1596" y="442" width="13" height="10" rx="1" fill="#dcdcdc"/><rect x="1598" y="439" width="5" height="3" fill="#dcdcdc"/><circle cx="1601" cy="447" r="2.800" fill="#333"/><rect x="1606" y="444" width="2" height="6" fill="#333"/>
<!-- output -->
<rect x="1596" y="469" width="13" height="4" fill="#dcdcdc"/><path d="M1596,473 H1609 V481 H1606 V477 H1599 V481 H1596 Z" fill="#dcdcdc"/><polygon points="1600,482 1602.500,477 1605,482" fill="#dcdcdc"/>
<use href="#vl" transform="translate(1602,503)"/>
<use href="#sc" transform="translate(1602,532)"/>
<!-- world -->
<circle cx="1602" cy="559" r="6.500" fill="none" stroke="#c85a5a" stroke-width="1.300"/><path d="M1597,556 Q1601,554 1603,557 Q1601,560 1603,563 L1600,565 Q1597,561 1597,556 M1604,553 L1607,556 L1604,557 Z" fill="#c85a5a"/>
<!-- object -->
<g fill="none" stroke="#cc8a3f" stroke-width="1.200"><path d="M1595,592 V588 H1599 M1605,588 H1609 V592 M1609,598 V602 H1605 M1599,602 H1595 V598"/></g><rect x="1597" y="590" width="10" height="10" fill="#cc8a3f"/>
<!-- modifiers wrench -->
<path d="M1596,629 L1603,621 Q1602,616 1606,615 Q1609,615 1610,616 L1607,619 L1609,621 L1611,618 Q1612,623 1607,624 L1600,631 Q1596,632 1596,629 Z" fill="#6f91dc"/>
<!-- particles -->
<g fill="#6f91dc"><circle cx="1597" cy="646" r="2.200"/><circle cx="1608" cy="656" r="2.200"/><circle cx="1597" cy="656" r="1.800"/><circle cx="1608" cy="646" r="1.200"/></g><path d="M1597,646 L1608,656 M1597,646 V655 M1599,646 H1607" stroke="#6f91dc" fill="none"/>
<!-- physics -->
<circle cx="1602" cy="679" r="6" fill="none" stroke="#6f91dc" stroke-width="1.200"/><circle cx="1602" cy="679" r="2.300" fill="#6f91dc"/><circle cx="1608" cy="674" r="2" fill="#6f91dc"/>
<!-- constraints -->
<ellipse cx="1602" cy="707" rx="8" ry="5.500" fill="none" stroke="#6f91dc" stroke-width="1.300" transform="rotate(-35 1602 707)"/><circle cx="1600" cy="708" r="2.300" fill="#6f91dc"/>
<!-- data -->
<use href="#me" transform="translate(1602,735) scale(1.050)"/>
<!-- material -->
<circle cx="1602" cy="763" r="7" fill="#d9676c"/><path d="M1602,763 V757 A6,6 0 0 1 1608,763 Z M1602,763 V769 A6,6 0 0 1 1596,763 Z" fill="#3a2a2a"/>
<!-- texture -->
<rect x="1595" y="792" width="14" height="14" fill="#d9676c"/><path d="M1598,792 H1601 V795 H1598 Z M1604,792 H1607 V795 H1604 Z M1595,795 H1598 V798 H1595 Z M1601,795 H1604 V798 H1601 Z M1607,795 H1609 V798 H1607 Z M1598,798 H1601 V801 H1598 Z M1604,798 H1607 V801 H1604 Z M1595,801 H1598 V804 H1595 Z M1601,801 H1604 V804 H1601 Z M1607,801 H1609 V804 H1607 Z M1598,804 H1601 V806 H1598 Z M1604,804 H1607 V806 H1604 Z" fill="#3a2a2a"/>

<!-- context path -->
<use href="#msel" transform="translate(1633,407)"/><text x="1649" y="411">Curve.002</text>
<polygon points="1715,403 1719,407 1715,411" fill="#5c5c5c"/>
<use href="#cb" transform="translate(1741,407)"/><text x="1757" y="411">SVGMat.005</text>
<path d="M1895,412 L1899,407 L1898,404 L1903,400 L1908,405 L1904,409 L1901,409 L1897,414" fill="none" stroke="#7b7b7b" stroke-width="1.100"/>

<!-- slot list -->
<rect x="1624" y="434" width="258" height="118" rx="4" fill="#2b2b2b"/>
<rect x="1629" y="439" width="248" height="18" rx="2" fill="#5f626d"/>
<circle cx="1637" cy="448" r="6.500" fill="url(#sph)"/><text x="1654" y="452" style="fill:#e4e4e4">SVGMat.005</text>
<circle cx="1637" cy="468" r="6.500" fill="url(#sph)"/><text x="1654" y="472">SVGMat.004</text>
<polygon points="1635,539 1641,542 1635,545" fill="#999"/>
<g fill="#999"><rect x="1757" y="540" width="1" height="1"/><rect x="1760" y="540" width="1" height="1"/><rect x="1763" y="540" width="1" height="1"/><rect x="1766" y="540" width="1" height="1"/><rect x="1757" y="543" width="1" height="1"/><rect x="1760" y="543" width="1" height="1"/><rect x="1763" y="543" width="1" height="1"/><rect x="1766" y="543" width="1" height="1"/></g>
<rect x="1892" y="434" width="18" height="37" rx="3" fill="#545454"/><path d="M1892,452.500 H1910" stroke="#3a3a3a"/><path d="M1901,438 V448 M1896,443 H1906 M1896,462 H1906" stroke="#e4e4e4" stroke-width="1.100"/>
<rect class="dd" x="1892" y="480" width="18" height="18" rx="3"/><use href="#ch" transform="translate(1901,489) scale(1.300)"/>
<rect x="1892" y="506" width="18" height="38" rx="3" fill="#545454"/><path d="M1892,525 H1910" stroke="#3a3a3a"/><polygon points="1901,511 1906,518 1896,518" fill="#e4e4e4"/><polygon points="1901,539 1906,532 1896,532" fill="#e4e4e4"/>

<!-- material selector -->
<rect class="dd" x="1624" y="559" width="31" height="18" rx="3"/><use href="#cb" transform="translate(1635,568)"/><use href="#ch" transform="translate(1648,568.500)"/>
<rect x="1655" y="559" width="156" height="18" fill="#1f1f1f"/><text x="1662" y="572">SVGMat.005</text>
<rect x="1811" y="559" width="19.500" height="18" fill="#545454"/><path d="M1814.500,563 L1820.500,561.500 L1826.500,563 V569 Q1825,574 1820.500,575.500 Q1816,574 1814.500,569 Z" fill="none" stroke="#8a8a8a" stroke-width="1.100"/>
<rect x="1831" y="559" width="19" height="18" fill="#545454"/><use href="#copy" transform="translate(1840,568)"/>
<rect x="1851" y="559" width="19" height="18" rx="2" fill="#545454"/><use href="#xx" transform="translate(1860,568)"/>
<rect class="dd" x="1880" y="559" width="30" height="18" rx="3"/><use href="#mew" transform="translate(1891,568)"/><use href="#ch" transform="translate(1905,568.500)"/>

<!-- panels -->
<polygon points="1624,594 1630,598 1624,602" fill="#999"/>
<text x="1637" y="602" class="dim">Preview</text>
<rect x="1615" y="611" width="304" height="23" fill="#424242"/>
<polygon points="1624,620 1630,620 1627,625" fill="#999"/>
<text x="1637" y="626" class="dim">Surface</text>
<g fill="#8a8a8a"><rect x="1901" y="597" width="1" height="1"/><rect x="1904" y="597" width="1" height="1"/><rect x="1907" y="597" width="1" height="1"/><rect x="1910" y="597" width="1" height="1"/><rect x="1901" y="600" width="1" height="1"/><rect x="1904" y="600" width="1" height="1"/><rect x="1907" y="600" width="1" height="1"/><rect x="1910" y="600" width="1" height="1"/><rect x="1901" y="621" width="1" height="1"/><rect x="1904" y="621" width="1" height="1"/><rect x="1907" y="621" width="1" height="1"/><rect x="1910" y="621" width="1" height="1"/><rect x="1901" y="624" width="1" height="1"/><rect x="1904" y="624" width="1" height="1"/><rect x="1907" y="624" width="1" height="1"/><rect x="1910" y="624" width="1" height="1"/><rect x="1901" y="792" width="1" height="1"/><rect x="1904" y="792" width="1" height="1"/><rect x="1907" y="792" width="1" height="1"/><rect x="1910" y="792" width="1" height="1"/><rect x="1901" y="795" width="1" height="1"/><rect x="1904" y="795" width="1" height="1"/><rect x="1907" y="795" width="1" height="1"/><rect x="1910" y="795" width="1" height="1"/></g>
<rect x="1624" y="643" width="286" height="18" rx="3" fill="#545454"/>
<g fill="none" stroke="#dcdcdc" stroke-width="1.100"><rect x="1630" y="645" width="9" height="4" rx="1"/><rect x="1629" y="654" width="9" height="5" rx="1" fill="#dcdcdc"/><path d="M1640,657 Q1641,657 1641,656 M1641,647 H1644 V653"/></g>
<text x="1776" y="656" class="m">Use Nodes</text>

<text x="1725" y="692" class="e">Base Color</text><rect x="1736" y="679" width="154" height="18" rx="3" fill="#fff"/>
<circle cx="1901" cy="688" r="2" fill="#d8d8d8"/>
<text x="1725" y="717" class="e">Metallic</text><rect class="nf" x="1736" y="703" width="154" height="19" rx="3"/><text x="1813" y="717" class="m">0.000</text><circle cx="1901" cy="713" r="2" fill="#d8d8d8"/>
<text x="1725" y="742" class="e">Specular</text><rect class="nf" x="1736" y="728" width="154" height="19" rx="3"/><path d="M1739,728 H1812 V747 H1739 Q1736,747 1736,744 V731 Q1736,728 1739,728 Z" fill="#5f7dc8"/><text x="1813" y="742" class="m w">0.500</text><circle cx="1901" cy="738" r="2" fill="#d8d8d8"/>
<text x="1725" y="767" class="e">Roughness</text><rect class="nf" x="1736" y="753" width="154" height="19" rx="3"/><path d="M1739,753 H1796 V772 H1739 Q1736,772 1736,769 V756 Q1736,753 1739,753 Z" fill="#5f7dc8"/><text x="1813" y="767" class="m w">0.400</text><circle cx="1901" cy="763" r="2" fill="#d8d8d8"/>

<rect x="1615" y="781" width="304" height="24" fill="#424242"/>
<polygon points="1624,791 1630,791 1627,796" fill="#999"/>
<text x="1637" y="797" class="dim">Settings</text>
<rect x="1744" y="818" width="12" height="12" rx="2" fill="#5a5a5a"/><text x="1760" y="827">Backface Culling</text>
<text x="1733" y="852" class="e">Blend Mode</text><rect class="dd" x="1743" y="839" width="167" height="18" rx="3"/><text x="1751" y="852">Opaque</text><use href="#ch" transform="translate(1904,849)"/>
<text x="1733" y="877" class="e">Shadow Mode</text><rect class="dd" x="1743" y="864" width="167" height="18" rx="3"/><text x="1751" y="877">Opaque</text><use href="#ch" transform="translate(1904,874)"/>
<text x="1733" y="902" class="e" style="fill:#707070">Clip Threshold</text><rect x="1743" y="889" width="167" height="18" rx="3" fill="#484848"/><path d="M1746,889 H1826 V907 H1746 Q1743,907 1743,904 V892 Q1743,889 1746,889 Z" fill="#4b5a7e"/><text x="1826" y="902" class="m" style="fill:#7d7d7d">0.500</text>
<rect x="1744" y="918" width="12" height="12" rx="2" fill="#5a5a5a"/><text x="1760" y="927">Screen Space Refraction</text>
<text x="1733" y="952" class="e">Refraction Depth</text><rect class="nf" x="1743" y="939" width="167" height="18" rx="3"/><text x="1826" y="952" class="m">0 m</text>
<rect x="1744" y="968" width="12" height="12" rx="2" fill="#5a5a5a"/><text x="1760" y="977">Subsurface Translucency</text>
<text x="1733" y="1002" class="e">Pass Index</text><rect class="nf" x="1743" y="989" width="167" height="15"/><text x="1826" y="1002" class="m">0</text>
</svg>
</body></html>
